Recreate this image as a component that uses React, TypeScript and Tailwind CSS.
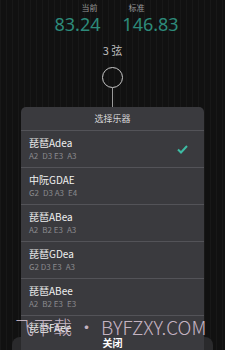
import React from "react";

const items = [
  { name: "琵琶Adea", notes: ["A2", "D3 E3", "A3"], checked: true },
  { name: "中阮GDAE", notes: ["G2", "D3 A3", "E4"] },
  { name: "琵琶ABea", notes: ["A2", "B2 E3", "A3"] },
  { name: "琵琶GDea", notes: ["G2 D3 E3", "A3"] },
  { name: "琵琶ABee", notes: ["A2", "B2 E3", "E3"] },
  { name: "琵琶FAee", notes: ["F2", "A2 E3", "E3"] },
];

export default function App() {
  return (
    <div
      className="relative w-[225px] h-[350px] overflow-hidden bg-[#111111] bg-[repeating-linear-gradient(90deg,#181818_0px,#181818_1px,#111111_1px,#111111_6px)] text-white"
      style={{ fontFamily: '"Noto Sans CJK SC", "Noto Sans", sans-serif' }}
    >
      <div className="flex flex-col items-center">
        <div className="flex gap-[14px] mt-[2px] pl-[6px]">
          <div className="flex flex-col items-center w-[56px]">
            <span className="text-[8px] leading-[12px] text-[#9a9a9a] pl-[24px]">当前</span>
            <span className="text-[18px] leading-[20px] text-[#2d8a7a]" style={{ fontFamily: '"Noto Sans", sans-serif' }}>83.24</span>
          </div>
          <div className="flex flex-col items-center w-[62px]">
            <span className="text-[8px] leading-[12px] text-[#9a9a9a] pr-[28px]">标准</span>
            <span className="text-[18px] leading-[20px] text-[#2d8a7a]" style={{ fontFamily: '"Noto Sans", sans-serif' }}>146.83</span>
          </div>
        </div>
        <div className="mt-[9px] text-[11px] leading-[14px] text-[#bdbdbd]">3 弦</div>
        <div className="mt-[10px] w-[21px] h-[21px] rounded-full border border-[#c8c8c8]" />
        <div className="w-px h-[25px] bg-[#9a9a9a]" />
      </div>

      <div className="absolute left-[12px] top-[337px] w-[201px] h-[30px] rounded-[8px] bg-[#2a2a2c]" />

      <div className="absolute left-[21px] top-[107px] w-[183px] h-[260px] rounded-[5px] bg-[#3a3a3e] flex flex-col">
        <div className="h-[24px] flex items-center justify-center text-[9px] text-[#d6d6d6] border-b border-[#535358]">
          选择乐器
        </div>
        <div className="h-[203px] overflow-hidden">
          {items.map((it) => (
            <div key={it.name} className="h-[37px] border-b border-[#535358] flex items-center justify-between pl-[8px] pr-[16px]">
              <div className="flex flex-col">
                <span className="text-[10px] leading-[14px] text-[#f0f0f0]">{it.name}</span>
                <span className="text-[8px] leading-[12px] text-[#8a8a8e] flex gap-[4px]">
                  {it.notes.map((n, i) => (
                    <span key={i}>{n}</span>
                  ))}
                </span>
              </div>
              {it.checked && (
                <svg width="11" height="9" viewBox="0 0 11 9">
                  <path d="M1 4.5 L4 7.5 L10 1" fill="none" stroke="#3dbba3" strokeWidth="2" />
                </svg>
              )}
            </div>
          ))}
        </div>
        <div className="h-[16px] flex items-center justify-center text-[10px] font-bold text-white">关闭</div>
      </div>

      <div className="absolute left-[15px] top-[315px] text-[19px] leading-[24px] font-light text-[#ead6e6]/80 whitespace-nowrap" style={{ fontFamily: '"Noto Sans CJK SC", "Noto Sans", sans-serif' }}>
        飞下载<span className="mx-[5px]">•</span>BYFZXY.COM
      </div>
    </div>
  );
}
